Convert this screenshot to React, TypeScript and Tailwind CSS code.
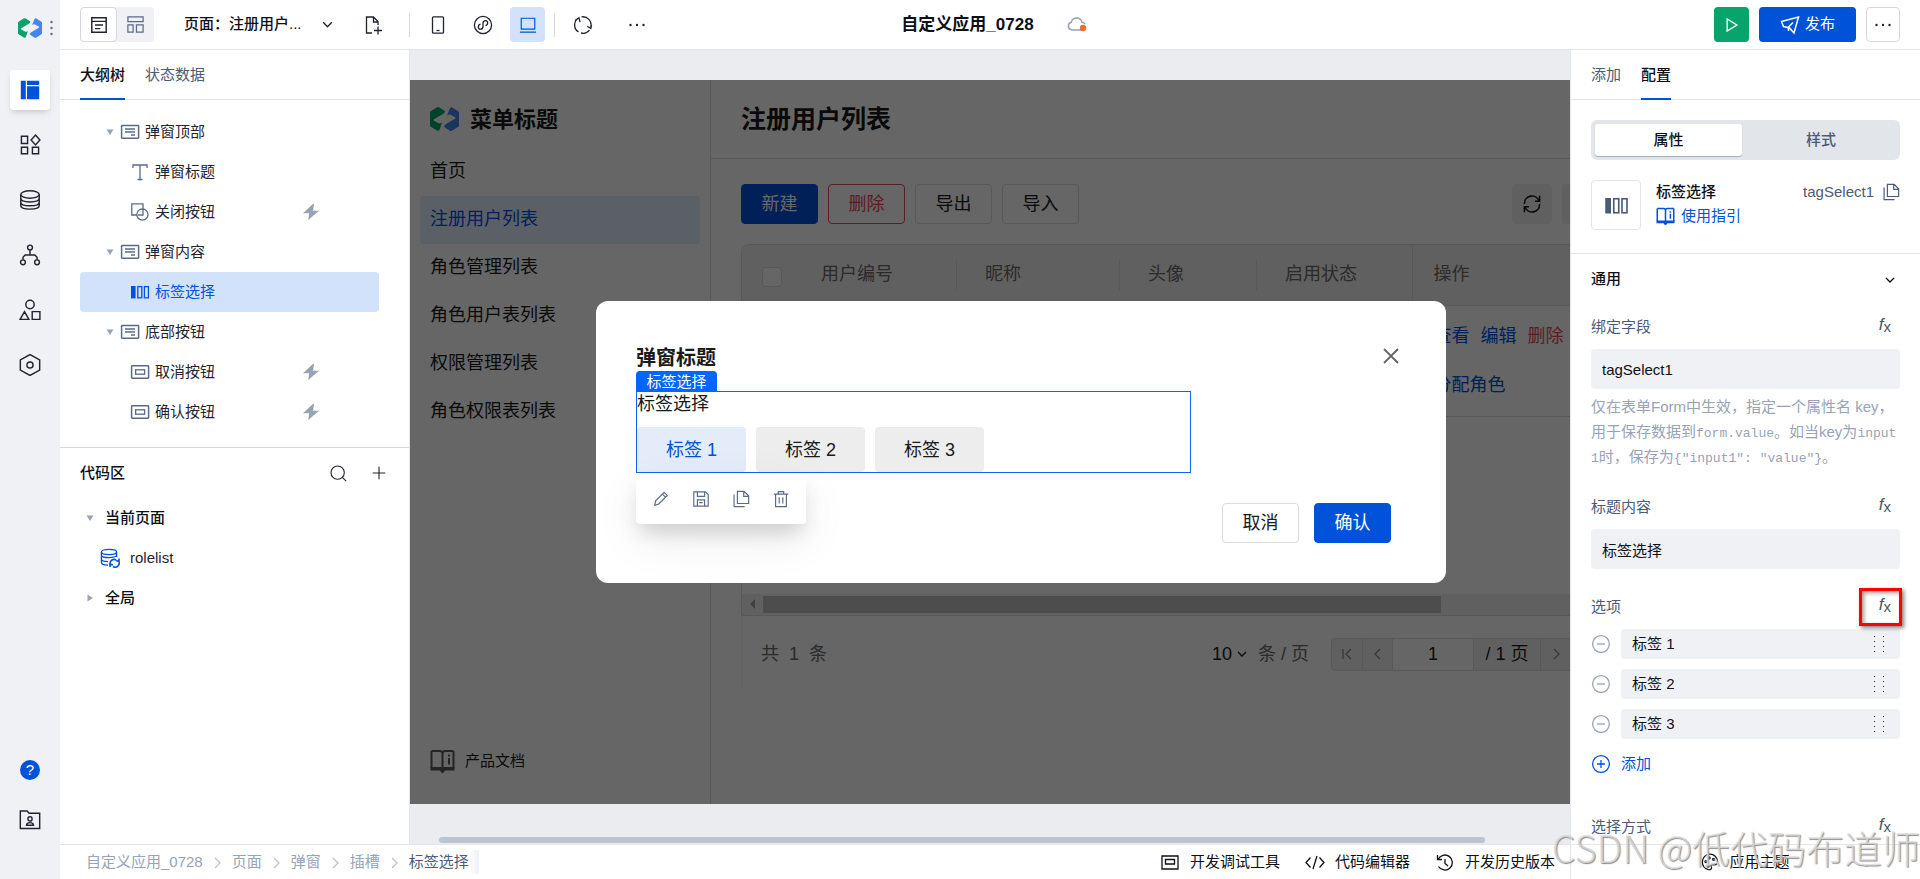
import React, { useState } from "react";
import clsx from "clsx";

type IconProps = {
  children: React.ReactNode;
  className?: string;
  box?: string;
};

const Icon = ({ children, className, box = "0 0 20 20" }: IconProps) => (
  <svg
    viewBox={box}
    fill="none"
    stroke="currentColor"
    strokeWidth="1.3"
    className={clsx("shrink-0", className)}
    aria-hidden="true"
  >
    {children}
  </svg>
);

const Logo = ({ className }: { className?: string }) => (
  <svg viewBox="0 0 29 24" className={clsx("shrink-0", className)} aria-hidden="true">
    <path
      fill="#07a56b"
      d="M0 5.500Q0 4.800.7 4.300L6.600.5Q8-.3 9.400.5L14.800 4Q15 5.800 13 6.900L4 12.200Q3 13 4 13.700L8.500 16.300Q10 17 12 15.500L9.600 22.600Q8.800 24.300 7 23.600L.7 19.700Q0 19.300 0 18.500Z"
    />
    <path
      fill="#4684f0"
      d="M29 18.500Q29 19.200 28.300 19.700L22.400 23.500Q21 24.300 19.600 23.500L14.200 20Q14 18.200 16 17.100L25 11.800Q26 11 25 10.300L20.500 7.700Q19 7 17 8.500L19.800 1.400Q20.600-.3 22.200.4L28.300 4.300Q29 4.700 29 5.500Z"
    />
  </svg>
);

const ContainerIcon = () => (
  <Icon className="h-5 w-5 text-[#5a6b86]">
    <rect x="1.6" y="3.6" width="17" height="12.6" rx="0.6" strokeWidth="1.5" />
    <path d="M5 7h10M5 10h10M11 13h4" />
  </Icon>
);

const TextIcon = () => (
  <Icon className="h-5 w-5 text-[#5a6b86]">
    <path d="M3 6V3h14v3M10 3v14.5M7.5 17.5h5" />
  </Icon>
);

const ShapesIcon = () => (
  <Icon className="h-5 w-5 text-[#5a6b86]">
    <path d="M7 13H1.800V1.800H13V7" />
    <circle cx="12.4" cy="12.6" r="5.6" />
    <path d="M8 13h5V7" />
  </Icon>
);

const ButtonIcon = () => (
  <Icon className="h-5 w-5 text-[#5a6b86]">
    <rect x="1.6" y="3.8" width="17" height="12.4" rx="0.6" strokeWidth="1.5" />
    <rect x="5.6" y="7.8" width="9" height="4.4" />
  </Icon>
);

const TagsIcon = ({ className }: { className?: string }) => (
  <Icon className={className}>
    <rect x="1" y="4" width="4.6" height="12.4" fill="currentColor" stroke="none" />
    <rect x="7.8" y="4.6" width="4" height="11.2" />
    <rect x="14.4" y="4.6" width="4" height="11.2" />
  </Icon>
);

const BoltIcon = () => (
  <svg viewBox="0 0 14 14" className="h-4 w-4" fill="#97a3b7" aria-hidden="true">
    <path d="M8.600 0L0 8h5.400L4.600 14L14 6H8.800L9.600 0Z" />
  </svg>
);

const ChevronDown = ({ className }: { className?: string }) => (
  <Icon box="0 0 12 12" className={className}>
    <path d="M2 4l4 4 4-4" />
  </Icon>
);

const CopyIcon = ({ className }: { className?: string }) => (
  <Icon className={className}>
    <path d="M6 1.500h7.500L18.500 6.500V15H6zM13 1.500V7h5.500" />
    <path d="M2.300 5v13.500H14" />
  </Icon>
);

const RefreshIcon = ({ className }: { className?: string }) => (
  <Icon className={className}>
    <path
      strokeWidth="1.600"
      d="M2.500 10V9A7.400 7 0 0 1 16.800 6.500M17.600 1.800v5.400H13M17.500 10v1A7.400 7 0 0 1 3.200 13.500M2.400 18.200v-5.400H7"
    />
  </Icon>
);

const BookIcon = ({ className }: { className?: string }) => (
  <Icon box="0 0 25 24" className={className}>
    <path
      strokeWidth="2"
      d="M1.500 2h8.500q2.500 0 2.500 2.500V19M23.500 2H15q-2.500 0-2.500 2.500M1.500 2v17M23.500 2v17M19 9v6.500M19 5.500v2"
    />
    <path d="M.5 18h24v3.600h-9.500q-.6 2.400-2.500 2.400t-2.500-2.400H.5z" fill="currentColor" stroke="none" />
  </Icon>
);

const Dots = ({ className }: { className?: string }) => (
  <svg viewBox="0 0 18 4" fill="currentColor" className={clsx("h-1 w-[18px]", className)}>
    <circle cx="2.500" cy="2" r="1.200" />
    <circle cx="9" cy="2" r="1.200" />
    <circle cx="15.500" cy="2" r="1.200" />
  </svg>
);

const Triangle = ({ open }: { open: boolean }) => (
  <svg viewBox="0 0 10 10" className="h-[10px] w-[10px]" fill="#97a3b7" aria-hidden="true">
    <path d={open ? "M1.500 2.500h7L5 8z" : "M2.500 1.500v7L8 5z"} />
  </svg>
);

const FxButton = ({ marked }: { marked?: boolean }) => (
  <button
    aria-label="fx"
    className={clsx(
      "relative flex h-[34px] items-center pr-[9px] text-[#4b5563]",
      marked &&
        "before:absolute before:top-px before:-right-[2px] before:h-[38px] before:w-[43px] before:border-[3px] before:border-[#ff0000] before:shadow-[2px_2px_4px_rgba(0,0,0,0.5),inset_2px_2px_4px_rgba(0,0,0,0.4)]"
    )}
  >
    <i className="text-[17px] leading-none">f</i>
    <span className="pt-1 text-[15px] leading-none">x</span>
  </button>
);

const railIcons = [
  <Icon className="h-5 w-5 text-[#0052d9]">
    <path d="M.8.800h5v18.400h-5zM7 .800h12.200V5H7zM7 6.200h12.200v13H7z" fill="currentColor" stroke="none" />
  </Icon>,
  <Icon className="h-[22px] w-[22px]">
    <path d="M2.200 2h5.600v6.600H2.200zM2.200 12h5.600v6H2.200zM12.200 12h5.600v6h-5.600zM15 1l4 4.500-4 4.500-4-4.500z" />
  </Icon>,
  <Icon className="h-[22px] w-[22px]">
    <ellipse cx="10" cy="5" rx="8.400" ry="3.400" />
    <path d="M1.600 5v10c0 4.400 16.800 4.400 16.800 0V5M1.600 8.500c0 4.400 16.800 4.400 16.800 0M1.600 12c0 4.400 16.800 4.400 16.800 0" />
  </Icon>,
  <Icon className="h-[22px] w-[22px]">
    <circle cx="10" cy="3.200" r="2.200" />
    <circle cx="3.600" cy="16.600" r="2.200" />
    <circle cx="16.400" cy="16.600" r="2.200" />
    <path d="M10 5.400V10M3.600 14.400V12l2-2h8.800l2 2v2.400" />
  </Icon>,
  <Icon className="h-[22px] w-[22px]">
    <circle cx="10" cy="5" r="3.800" />
    <path d="M5 11.500L9 18.500H1zM12 11.500h7v7h-7z" />
  </Icon>,
  <Icon className="h-[22px] w-[22px]">
    <path d="M10 .500l8.800 4.900v9.200L10 19.500l-8.800-4.900V5.400z" />
    <circle cx="10" cy="10" r="2.800" />
  </Icon>,
];

const tree = [
  { text: "弹窗顶部", level: 0, icon: <ContainerIcon /> },
  { text: "弹窗标题", level: 1, icon: <TextIcon /> },
  { text: "关闭按钮", level: 1, icon: <ShapesIcon />, event: true },
  { text: "弹窗内容", level: 0, icon: <ContainerIcon /> },
  { text: "标签选择", level: 1, icon: <TagsIcon className="h-5 w-5" />, active: true },
  { text: "底部按钮", level: 0, icon: <ContainerIcon /> },
  { text: "取消按钮", level: 1, icon: <ButtonIcon />, event: true },
  { text: "确认按钮", level: 1, icon: <ButtonIcon />, event: true },
];

const menu = [
  "首页",
  "注册用户列表",
  "角色管理列表",
  "角色用户表列表",
  "权限管理列表",
  "角色权限表列表",
];

const tags = ["标签 1", "标签 2", "标签 3"];

const Rail = () => (
  <nav className="flex w-[60px] shrink-0 flex-col items-center bg-[#f0f1f5] pb-[39px] text-[#1f2430]">
    <div className="flex h-[55px] w-full items-center gap-2 pl-[18px]">
      <Logo className="h-5 w-6" />
      <svg viewBox="0 0 3 16" className="h-4 w-[3px]" fill="#5a6b86" aria-hidden="true">
        <circle cx="1.500" cy="2" r="1.200" />
        <circle cx="1.500" cy="8" r="1.200" />
        <circle cx="1.500" cy="14" r="1.200" />
      </svg>
    </div>
    <div className="flex flex-1 flex-col gap-[15px] pt-[15px]">
      {railIcons.map((icon, i) => (
        <button
          key={i}
          className={clsx(
            "flex h-10 w-10 items-center justify-center rounded",
            i === 0 && "bg-white shadow-md"
          )}
        >
          {icon}
        </button>
      ))}
    </div>
    <div className="flex flex-col gap-[10px]">
      <button className="flex h-10 w-10 items-center justify-center">
        <span className="flex h-5 w-5 items-center justify-center rounded-full bg-[#0052d9] text-[15px] text-white">
          ?
        </span>
      </button>
      <button className="flex h-10 w-10 items-center justify-center">
        <Icon className="h-[22px] w-[22px]">
          <path d="M1.200 1.800h6.200l1.800 2h9.600v14H1.200z" />
          <circle cx="10" cy="9" r="1.900" />
          <path d="M6.800 14.800c.4-3.200 6-3.200 6.400 0z" />
        </Icon>
      </button>
    </div>
  </nav>
);

const Header = () => (
  <header className="grid h-[50px] shrink-0 grid-cols-[1fr_auto_1fr] items-center border-b border-[#e3e5ea] bg-white px-5 text-[#1f2430]">
    <div className="flex items-center">
      <div className="flex h-[35px] w-[74px] rounded bg-[#f0f1f5]">
        <button className="flex w-[37px] items-center justify-center rounded border border-[#d5d8e0] bg-white">
          <Icon className="h-[18px] w-[18px]">
            <path d="M2 2h16v16H2zM2 6h16M5.500 10h9M5.500 14h6" strokeWidth="1.600" />
          </Icon>
        </button>
        <button className="flex w-[37px] items-center justify-center text-[#5a6b86]">
          <Icon className="h-[19px] w-[19px]">
            <path d="M2 2h16v5H2zM2 10.500h5.500V18H2zM11 10.500h7V18h-7z" />
          </Icon>
        </button>
      </div>
      <div className="relative ml-[30px] flex items-center">
        <select
          aria-label="页面"
          className="w-[150px] appearance-none bg-transparent text-[15px] font-medium text-[#0d1017] outline-none"
        >
          <option>页面：注册用户...</option>
        </select>
        <ChevronDown className="pointer-events-none absolute right-0 h-[13px] w-[13px]" />
      </div>
      <button className="ml-[29px]">
        <Icon className="h-5 w-5">
          <path d="M9 18H3.500V2h7L15 6.500V10M10.500 2v5H15M11 15.500h8M15 11.500v8" />
        </Icon>
      </button>
      <div className="ml-[26px] flex h-6 items-center gap-[2px] border-l border-[#d5d8e0] pl-[10px]">
        <button className="flex h-[35px] w-[35px] items-center justify-center">
          <Icon className="h-5 w-5">
            <rect x="4.500" y="1.800" width="11" height="16.400" rx="1" />
            <path d="M8.500 15.500h3" />
          </Icon>
        </button>
        <button className="mx-2 flex h-[35px] w-[35px] items-center justify-center">
          <Icon className="h-5 w-5">
            <circle cx="10" cy="10" r="8.600" />
            <path d="M7.500 9.200c-3 .8-2.800 5 0 5 1.800 0 2.500-1.400 2.500-3V8.600c0-1.600.7-3 2.500-3 2.800 0 3 4.200 0 5" />
          </Icon>
        </button>
        <button className="flex h-[35px] w-[35px] items-center justify-center rounded bg-[#d3e2fb] text-[#0052d9]">
          <Icon className="h-[18px] w-[18px]">
            <path d="M2.500 2.500h15v12h-15zM1 18h18" />
          </Icon>
        </button>
      </div>
      <div className="ml-[9px] flex h-6 items-center border-l border-[#d5d8e0] pl-[18px]">
        <button>
          <Icon className="h-5 w-5">
            <path d="M5.500 17A8.200 8.200 0 0 1 6 2.800M8.500 1.900A8.200 8.200 0 0 1 17.800 12M16.500 15.200A8.200 8.200 0 0 1 8 18M2 5.600L6 2.800l1 4.400M18.600 10.200L17.800 13.500l-3.600-2.200" />
          </Icon>
        </button>
        <button className="ml-[35px]">
          <Dots />
        </button>
      </div>
    </div>
    <div className="flex items-center gap-[33px] pl-2">
      <h1 className="text-[17px] font-bold text-[#0d1017]">自定义应用_0728</h1>
      <Icon className="h-[18px] w-[20px] text-[#97a3b7]" box="0 0 20 18">
        <path d="M16 14H5a4 4 0 0 1-.8-7.800 5.600 5.600 0 0 1 10.800 0 4 4 0 0 1 3 2" strokeWidth="1.500" />
        <circle cx="16" cy="12" r="3.200" fill="#ed6c30" stroke="none" />
      </Icon>
    </div>
    <div className="flex items-center justify-end gap-[10px]">
      <button aria-label="预览" className="flex h-[35px] w-[35px] items-center justify-center rounded bg-[#07a56b] text-white">
        <Icon className="h-4 w-4">
          <path d="M4 2.500l12 7.500-12 7.500z" strokeWidth="1.800" />
        </Icon>
      </button>
      <button className="flex h-[35px] w-[97px] items-center justify-center gap-[5px] rounded bg-[#0052d9] text-[15px] text-white">
        <Icon className="h-5 w-5">
          <path d="M1.500 6.500l17-4.500-4.500 16-4.500-5-6-1.500zM8.500 12l4.500-4.500M8.500 12v4" strokeWidth="1.500" />
        </Icon>
        发布
      </button>
      <button aria-label="更多" className="flex h-[35px] w-[34px] items-center justify-center rounded border border-[#d5d8e0]">
        <Dots />
      </button>
    </div>
  </header>
);

const LeftPanel = () => (
  <aside className="flex w-[350px] shrink-0 flex-col border-r border-[#e3e5ea] bg-white text-[15px] text-[#1f2430]">
    <div className="flex h-[50px] shrink-0 gap-5 border-b border-[#e3e5ea] px-5">
      <button className="-mb-px border-b-2 border-[#0052d9] pt-[3px] font-medium text-[#0d1017]">大纲树</button>
      <button className="pt-[2px] text-[#4b5b76]">状态数据</button>
    </div>
    <ul className="h-[348px] shrink-0 border-b border-[#d5d8e0] px-5 pt-3">
      {tree.map((node) => (
        <li
          key={node.text}
          className={clsx(
            "mr-[10px] flex h-10 items-center rounded",
            node.level === 0 ? "pl-[25px]" : "pl-[50px]",
            node.active && "bg-[#d3e2fb] text-[#0052d9]"
          )}
        >
          {node.level === 0 && (
            <span className="w-[15px]">
              <Triangle open />
            </span>
          )}
          {node.icon}
          <span className="flex-1 pl-[5px]">{node.text}</span>
          {node.event && (
            <span className="pr-[60px]">
              <BoltIcon />
            </span>
          )}
        </li>
      ))}
    </ul>
    <div className="flex h-[50px] items-center gap-[25px] pr-[23px] pl-5">
      <h2 className="flex-1 font-medium text-[#0d1017]">代码区</h2>
      <button aria-label="搜索">
        <Icon className="h-[17px] w-[17px]">
          <circle cx="9" cy="9" r="7.800" />
          <path d="M14.500 14.500L19 19" />
        </Icon>
      </button>
      <button aria-label="新增">
        <Icon className="h-[14px] w-[14px]">
          <path d="M10 1v18M1 10h18" strokeWidth="1.600" />
        </Icon>
      </button>
    </div>
    <ul>
      <li className="flex h-10 items-center gap-[10px] pl-[25px] font-medium text-[#0d1017]">
        <Triangle open />
        当前页面
      </li>
      <li className="flex h-10 items-center gap-[10px] pl-10">
        <Icon className="h-5 w-5 text-[#0052d9]">
          <ellipse cx="9" cy="4" rx="7.600" ry="2.600" />
          <path d="M1.400 4v10.500c0 1.600 3 2.600 6.600 2.600M16.600 4v5M1.400 7.500c1 2.800 14 2.800 15.200 0M1.400 11c0 1.600 3 2.600 6.600 2.600" />
          <path d="M10 15.500a4 4 0 0 1 6-3.500M19 14a4 4 0 0 1-6 4.500M10 19v-3l3 1M19 10.500v3l-3-1" strokeWidth="1.600" />
        </Icon>
        rolelist
      </li>
      <li className="flex h-10 items-center gap-[10px] pl-[25px] font-medium text-[#0d1017]">
        <Triangle open={false} />
        全局
      </li>
    </ul>
  </aside>
);

const headCell = "flex h-[30px] items-center pl-7";

const UserTable = () => (
  <div className="mt-5 overflow-hidden rounded-t-lg border border-[#dcdcdc]">
    <table className="w-full table-fixed text-left text-[18px]">
      <colgroup>
        <col className="w-[51px]" />
        <col className="w-[164px]" />
        <col className="w-[163px]" />
        <col className="w-[137px]" />
        <col className="w-[155px]" />
        <col />
      </colgroup>
      <thead>
        <tr className="h-[60px] border-b border-[#dcdcdc] bg-[#f1f1f1] text-[#6b6b6b]">
          <th className="pl-5">
            <input
              type="checkbox"
              aria-label="全选"
              className="mt-1 block h-5 w-5 appearance-none rounded border border-[#dcdcdc] bg-white"
            />
          </th>
          <th className="font-normal">
            <div className={clsx(headCell, "border-r border-[#dcdcdc]")}>用户编号</div>
          </th>
          <th className="font-normal">
            <div className={clsx(headCell, "border-r border-[#dcdcdc]")}>昵称</div>
          </th>
          <th className="font-normal">
            <div className={clsx(headCell, "border-r border-[#dcdcdc]")}>头像</div>
          </th>
          <th className="font-normal">
            <div className={headCell}>启用状态</div>
          </th>
          <th className="border-l border-[#dcdcdc] pl-[21px] font-normal">操作</th>
        </tr>
      </thead>
      <tbody>
        <tr className="border-b border-[#dcdcdc]">
          <td />
          <td />
          <td />
          <td />
          <td />
          <td className="border-l border-[#dcdcdc] py-[6px] pl-[21px] leading-[49px] text-[#0052d9]">
            <div className="flex gap-[11px]">
              <a href="#">查看</a>
              <a href="#">编辑</a>
              <a href="#" className="text-[#e34d59]">
                删除
              </a>
            </div>
            <a href="#">分配角色</a>
          </td>
        </tr>
      </tbody>
    </table>
    <div className="h-[177px]" />
    <div className="flex h-[21px] items-center bg-[#f1f1f1] pl-[6px]">
      <svg viewBox="0 0 10 10" className="mr-[5px] h-[10px] w-[10px]" fill="#a3a3a3" aria-hidden="true">
        <path d="M7 0v10L2 5z" />
      </svg>
      <div className="h-[17px] w-[678px] bg-[#c1c1c1]" />
    </div>
  </div>
);

const pagerCell = "flex items-center justify-center border-r border-[#dcdcdc]";

const Pager = () => (
  <div className="flex h-[73px] items-center border-l border-[#f0f0f0] pt-1 pl-[19px] text-[18px]">
    <span className="flex-1 text-[#6b6b6b]">共&nbsp; 1 &nbsp;条</span>
    <label className="flex items-center text-[#6b6b6b]">
      <span className="relative flex items-center text-[#1a1a1a]">
        <select aria-label="每页条数" className="w-9 appearance-none bg-transparent outline-none">
          <option>10</option>
        </select>
        <ChevronDown className="pointer-events-none absolute right-0 h-3 w-3" />
      </span>
      <span className="pl-[10px]">条 / 页</span>
    </label>
    <div className="ml-[22px] flex h-[33px] rounded border border-[#dcdcdc] bg-[#f1f1f1] text-[#8a8a8a]">
      <button className={clsx(pagerCell, "w-[31px]")}>
        <Icon box="0 0 14 14" className="h-[14px] w-[14px]">
          <path d="M3 2v10M11 2L6 7l5 5" />
        </Icon>
      </button>
      <button className={clsx(pagerCell, "w-[30px]")}>
        <Icon box="0 0 14 14" className="h-[14px] w-[14px]">
          <path d="M9 2L4 7l5 5" />
        </Icon>
      </button>
      <input
        aria-label="页码"
        defaultValue="1"
        className="w-[81px] border-r border-[#dcdcdc] bg-white text-center text-[#1a1a1a] outline-none"
      />
      <span className={clsx(pagerCell, "w-[67px] text-[#1a1a1a]")}>/ 1 页</span>
      <button className={clsx(pagerCell, "w-[30px]")}>
        <Icon box="0 0 14 14" className="h-[14px] w-[14px]">
          <path d="M5 2l5 5-5 5" />
        </Icon>
      </button>
      <button className="flex w-[30px] items-center justify-center">
        <Icon box="0 0 14 14" className="h-[14px] w-[14px]">
          <path d="M11 2v10M3 2l5 5-5 5" />
        </Icon>
      </button>
    </div>
  </div>
);

const outlineBtn = "h-10 w-[77px] rounded border text-[18px]";

const Modal = () => (
  <section className="w-[850px] rounded-xl bg-white py-10 pr-[55px] pl-10 text-[18px] text-[#1a1a1a]">
    <div className="flex h-[30px] items-center justify-between">
      <h3 className="pt-1 text-[20px] font-bold">弹窗标题</h3>
      <button aria-label="关闭" className="-mr-2 text-[#666]">
        <Icon box="0 0 16 16" className="h-4 w-4">
          <path d="M1 1l14 14M15 1L1 15" strokeWidth="1.800" />
        </Icon>
      </button>
    </div>
    <div className="relative mt-5 w-[555px] max-w-full border border-[#0f62f5]">
      <span className="absolute -top-[21px] -left-px flex h-[21px] w-[81px] items-center justify-center rounded-t bg-[#0066ff] text-[15px] leading-none text-white">
        标签选择
      </span>
      <p className="h-[35px] leading-6">标签选择</p>
      <div className="flex gap-[10px]">
        {tags.map((tag, i) => (
          <button
            key={tag}
            className={clsx(
              "h-[45px] w-[109px] rounded pt-[2px]",
              i === 0 ? "bg-[#e4ebf9] text-[#0052d9]" : "bg-[#ededed]"
            )}
          >
            {tag}
          </button>
        ))}
      </div>
      <div className="absolute top-[82px] -left-px flex h-[50px] w-[170px] items-center justify-around rounded-b bg-white px-[5px] text-[#5a6b86] shadow-[0_12px_20px_-4px_rgba(0,0,0,0.16),0_16px_48px_rgba(0,0,0,0.07)]">
        <button aria-label="编辑">
          <Icon className="h-[18px] w-[18px]">
            <path d="M3 17l1-5L13.500 2.500l3.500 3.500L7.500 15.500zM11.500 4.500l3.500 3.500" />
          </Icon>
        </button>
        <button aria-label="保存">
          <Icon className="h-[18px] w-[18px]">
            <path d="M2 2h13l3 3v13H2zM6 2v5h8V2M6 18v-7h8v7M8 14h4" />
          </Icon>
        </button>
        <button aria-label="复制">
          <CopyIcon className="h-[18px] w-[18px]" />
        </button>
        <button aria-label="删除">
          <Icon className="h-[18px] w-[18px]">
            <path d="M2 4.500h16M7 4.500V1.800h6v2.700M4 4.500V18.500h12V4.500M8 8v7M12 8v7" />
          </Icon>
        </button>
      </div>
    </div>
    <div className="mt-[30px] flex justify-end gap-[15px]">
      <button className={clsx(outlineBtn, "border-[#dcdcdc]")}>取消</button>
      <button className={clsx(outlineBtn, "border-[#0052d9] bg-[#0052d9] text-white")}>确认</button>
    </div>
  </section>
);

const Canvas = () => (
  <main className="flex min-w-0 flex-1 flex-col overflow-hidden bg-[#ebecf0] pt-[30px]">
    <div className="relative flex min-w-[1222px] flex-1 bg-white text-[18px] text-[#1a1a1a]">
      <div className="flex w-[301px] shrink-0 flex-col border-r border-[#dcdcdc] px-[10px]">
        <div className="flex h-[68px] items-center gap-[11px] px-[10px] pt-[10px]">
          <Logo className="h-6 w-[29px]" />
          <span className="text-[22px] font-bold">菜单标题</span>
        </div>
        <nav className="flex flex-1 flex-col">
          {menu.map((item, i) => (
            <a
              key={item}
              href="#"
              className={clsx(
                "flex h-12 items-center rounded px-[10px] pb-[2px]",
                i === 1 && "bg-[#e4edff] text-[#0052d9]"
              )}
            >
              {item}
            </a>
          ))}
        </nav>
        <div className="flex items-center gap-[10px] px-[10px] pb-[31px] text-[15px]">
          <BookIcon className="h-6 w-[25px] text-[#5a5a5a]" />
          产品文档
        </div>
      </div>
      <div className="min-w-0 flex-1">
        <h2 className="h-[79px] border-b border-[#dcdcdc] px-[30px] text-[25px] leading-[78px] font-bold">
          注册用户列表
        </h2>
        <div className="px-[30px] pt-[25px]">
          <div className="flex gap-[10px]">
            <button className={clsx(outlineBtn, "border-[#0052d9] bg-[#0052d9] text-white")}>新建</button>
            <button className={clsx(outlineBtn, "border-[#e34d59] text-[#e34d59]")}>删除</button>
            <button className={clsx(outlineBtn, "border-[#dcdcdc]")}>导出</button>
            <button className={clsx(outlineBtn, "border-[#dcdcdc]")}>导入</button>
            <button aria-label="刷新" className="ml-auto flex h-10 w-10 items-center justify-center rounded bg-[#f1f1f1]">
              <RefreshIcon className="h-5 w-5" />
            </button>
            <button aria-label="设置" className="h-10 w-10 rounded bg-[#f1f1f1]" />
          </div>
          <UserTable />
          <Pager />
        </div>
      </div>
      <div className="absolute inset-0 flex items-center justify-center bg-black/60">
        <Modal />
      </div>
    </div>
    <div className="flex h-10 shrink-0 items-end pr-[85px] pb-px pl-[29px]">
      <div className="h-[6px] flex-1 rounded-full bg-[#bcc4d0]" />
    </div>
  </main>
);

const fieldInput = "h-10 w-full rounded bg-[#f0f1f5] px-[11px] text-[#0d1017] outline-none";

const codeText =
  "align-middle font-['Liberation_Mono','Noto_Sans_CJK_SC',monospace] text-[13px] leading-none";

const RightPanel = () => {
  const [tab, setTab] = useState("属性");

  return (
    <aside className="flex w-[350px] shrink-0 flex-col overflow-hidden border-l border-[#e3e5ea] bg-white text-[15px] text-[#4b5b76]">
      <div className="flex h-[50px] shrink-0 gap-5 border-b border-[#e3e5ea] px-5">
        <button className="pt-[2px]">添加</button>
        <button className="-mb-px border-b-2 border-[#0052d9] pt-[3px] font-medium text-[#0d1017]">配置</button>
      </div>
      <div className="shrink-0 border-b border-[#e3e5ea] px-5 pt-5 pb-[23px]">
        <div className="flex h-10 rounded-md bg-[#e2e5ea] py-1 pl-1">
          {["属性", "样式"].map((name, i) => (
            <button
              key={name}
              onClick={() => setTab(name)}
              className={clsx(
                "rounded-[3px] font-medium",
                i === 0 ? "w-[147px]" : "flex-1",
                tab === name && "bg-white text-[#0d1017] shadow-[0_1px_1px_rgba(75,91,118,0.4)]"
              )}
            >
              {name}
            </button>
          ))}
        </div>
        <div className="mt-5 flex">
          <div className="flex h-[50px] w-[50px] items-center justify-center rounded border border-[#e3e5ea]">
            <TagsIcon className="h-[25px] w-[25px]" />
          </div>
          <div className="flex-1 pl-[15px] leading-6">
            <p className="font-medium text-[#0d1017]">标签选择</p>
            <a href="#" className="flex items-center gap-[6px] text-[#0052d9]">
              <BookIcon className="h-[18px] w-[19px]" />
              使用指引
            </a>
          </div>
          <div className="flex h-6 items-center gap-2">
            tagSelect1
            <CopyIcon className="h-[18px] w-[18px]" />
          </div>
        </div>
      </div>
      <div className="flex h-[51px] shrink-0 items-center justify-between pr-6 pl-5 text-[#0d1017]">
        <h2 className="font-medium">通用</h2>
        <ChevronDown className="h-3 w-3" />
      </div>
      <div className="px-5 pt-[2px]">
        <div className="flex h-[42px] items-start justify-between leading-10">
          <label htmlFor="bind-field">绑定字段</label>
          <FxButton />
        </div>
        <input id="bind-field" defaultValue="tagSelect1" className={fieldInput} />
        <p className="mt-[5px] h-[75px] leading-[25px] break-all text-[#97a3b7]">
          仅在表单Form中生效，指定一个属性名 key，
          <br />
          用于保存数据到
          <code className={codeText}>form.value</code>
          。如当key为
          <code className={codeText}>input1</code>
          时，保存为
          <code className={codeText}>{'{"input1": "value"}'}</code>
          。
        </p>
        <div className="mt-[18px] flex h-[42px] items-start justify-between leading-10">
          <label htmlFor="title-content">标题内容</label>
          <FxButton />
        </div>
        <input id="title-content" defaultValue="标签选择" className={fieldInput} />
        <div className="mt-[18px] flex h-[42px] items-start justify-between leading-10">
          <span>选项</span>
          <FxButton marked />
        </div>
        <ul className="flex flex-col gap-[10px]">
          {tags.map((tag) => (
            <li key={tag} className="flex items-center gap-[10px]">
              <button aria-label="移除" className="text-[#97a3b7]">
                <Icon className="h-5 w-5">
                  <circle cx="10" cy="10" r="8.400" />
                  <path d="M6 10h8" />
                </Icon>
              </button>
              <div className="flex h-[30px] flex-1 items-center rounded bg-[#f0f1f5] pr-[15px] pl-[11px] text-[#0d1017]">
                <input aria-label={tag} defaultValue={tag} className="min-w-0 flex-1 bg-transparent outline-none" />
                <svg viewBox="0 0 11 18" className="h-[18px] w-[11px]" fill="#1f2430" aria-hidden="true">
                  <path d="M0 1h1v1H0zM0 6h1v1H0zM0 11h1v1H0zM0 16h1v1H0zM9 1h1v1H9zM9 6h1v1H9zM9 11h1v1H9zM9 16h1v1H9z" />
                </svg>
              </div>
            </li>
          ))}
        </ul>
        <button className="mt-[10px] flex h-[30px] items-center gap-[10px] text-[#0052d9]">
          <Icon className="h-5 w-5">
            <circle cx="10" cy="10" r="8.400" />
            <path d="M6 10h8M10 6v8" />
          </Icon>
          添加
        </button>
        <div className="mt-[28px] flex h-[42px] items-start justify-between leading-10">
          <span>选择方式</span>
          <FxButton />
        </div>
      </div>
    </aside>
  );
};

const crumbs = ["自定义应用_0728", "页面", "弹窗", "插槽", "标签选择"];

const Footer = () => (
  <footer className="flex h-[35px] shrink-0 border-t border-[#e3e5ea] bg-white text-[15px] text-[#0d1017]">
    <div className="flex flex-1 items-center pr-[15px] pl-[26px]">
      <nav className="flex flex-1 items-center text-[#97a3b7]">
        {crumbs.map((crumb, i) => (
          <React.Fragment key={crumb}>
            {i > 0 && (
              <Icon box="0 0 15 15" className="mx-[7px] h-[15px] w-[15px] text-[#bcc4d0]">
                <path d="M5 3l5 5-5 5" />
              </Icon>
            )}
            <a href="#" className={clsx(i === crumbs.length - 1 && "text-[#4b5b76]")}>
              {crumb}
            </a>
          </React.Fragment>
        ))}
        <span className="h-6 w-[10px] bg-linear-to-r from-white to-[#f0f1f5]" />
      </nav>
      <div className="flex items-center gap-[25px]">
        <button className="flex items-center gap-[10px]">
          <Icon className="h-5 w-5">
            <path d="M2 4h16v13H2zM5.500 7.500h9v4.500h-9z" />
          </Icon>
          开发调试工具
        </button>
        <button className="flex items-center gap-[10px]">
          <Icon className="h-5 w-5">
            <path d="M5.500 5.500L1 10.500l4.500 5M14.500 5.500l4.500 5-4.500 5M12 4L8 17" />
          </Icon>
          代码编辑器
        </button>
        <button className="flex items-center gap-[10px]">
          <Icon className="h-5 w-5">
            <path d="M2.500 3v4.500H7M3 7.500a7.500 7.500 0 1 1 .5 7M10 7v4.500l3 2.500" />
          </Icon>
          开发历史版本
        </button>
      </div>
    </div>
    <div className="flex w-[350px] shrink-0 items-center justify-center border-l border-[#e3e5ea]">
      <button className="flex items-center gap-[10px]">
        <Icon className="h-[18px] w-[18px]">
          <path d="M8 18.500C3 17 1.500 13 1.500 10a8.500 8.500 0 0 1 17-.500c0 3-2 4-4.500 3.500s-3.500 1-2.500 2.500-.5 3.500-3.500 3z" />
          <circle cx="5.500" cy="9.500" r="1.200" />
          <circle cx="9" cy="5.500" r="1.200" />
          <circle cx="14" cy="7" r="1.200" />
          <circle cx="8" cy="14.500" r="1.200" />
        </Icon>
        应用主题
      </button>
    </div>
  </footer>
);

export default function App() {
  return (
    <div className="relative flex h-screen overflow-hidden bg-white font-['Liberation_Sans','Noto_Sans_CJK_SC',sans-serif]">
      <Rail />
      <div className="flex min-w-0 flex-1 flex-col">
        <Header />
        <div className="flex min-h-0 flex-1">
          <LeftPanel />
          <Canvas />
          <RightPanel />
        </div>
        <Footer />
      </div>
      <p className="pointer-events-none absolute right-0 bottom-[5px] font-['Noto_Sans_CJK_SC',sans-serif] text-[38px] leading-[54px] font-light text-[#dcdcdc]/80 [text-shadow:1px_1px_1px_#8f8f8f]">
        CSDN @低代码布道师
      </p>
    </div>
  );
}
